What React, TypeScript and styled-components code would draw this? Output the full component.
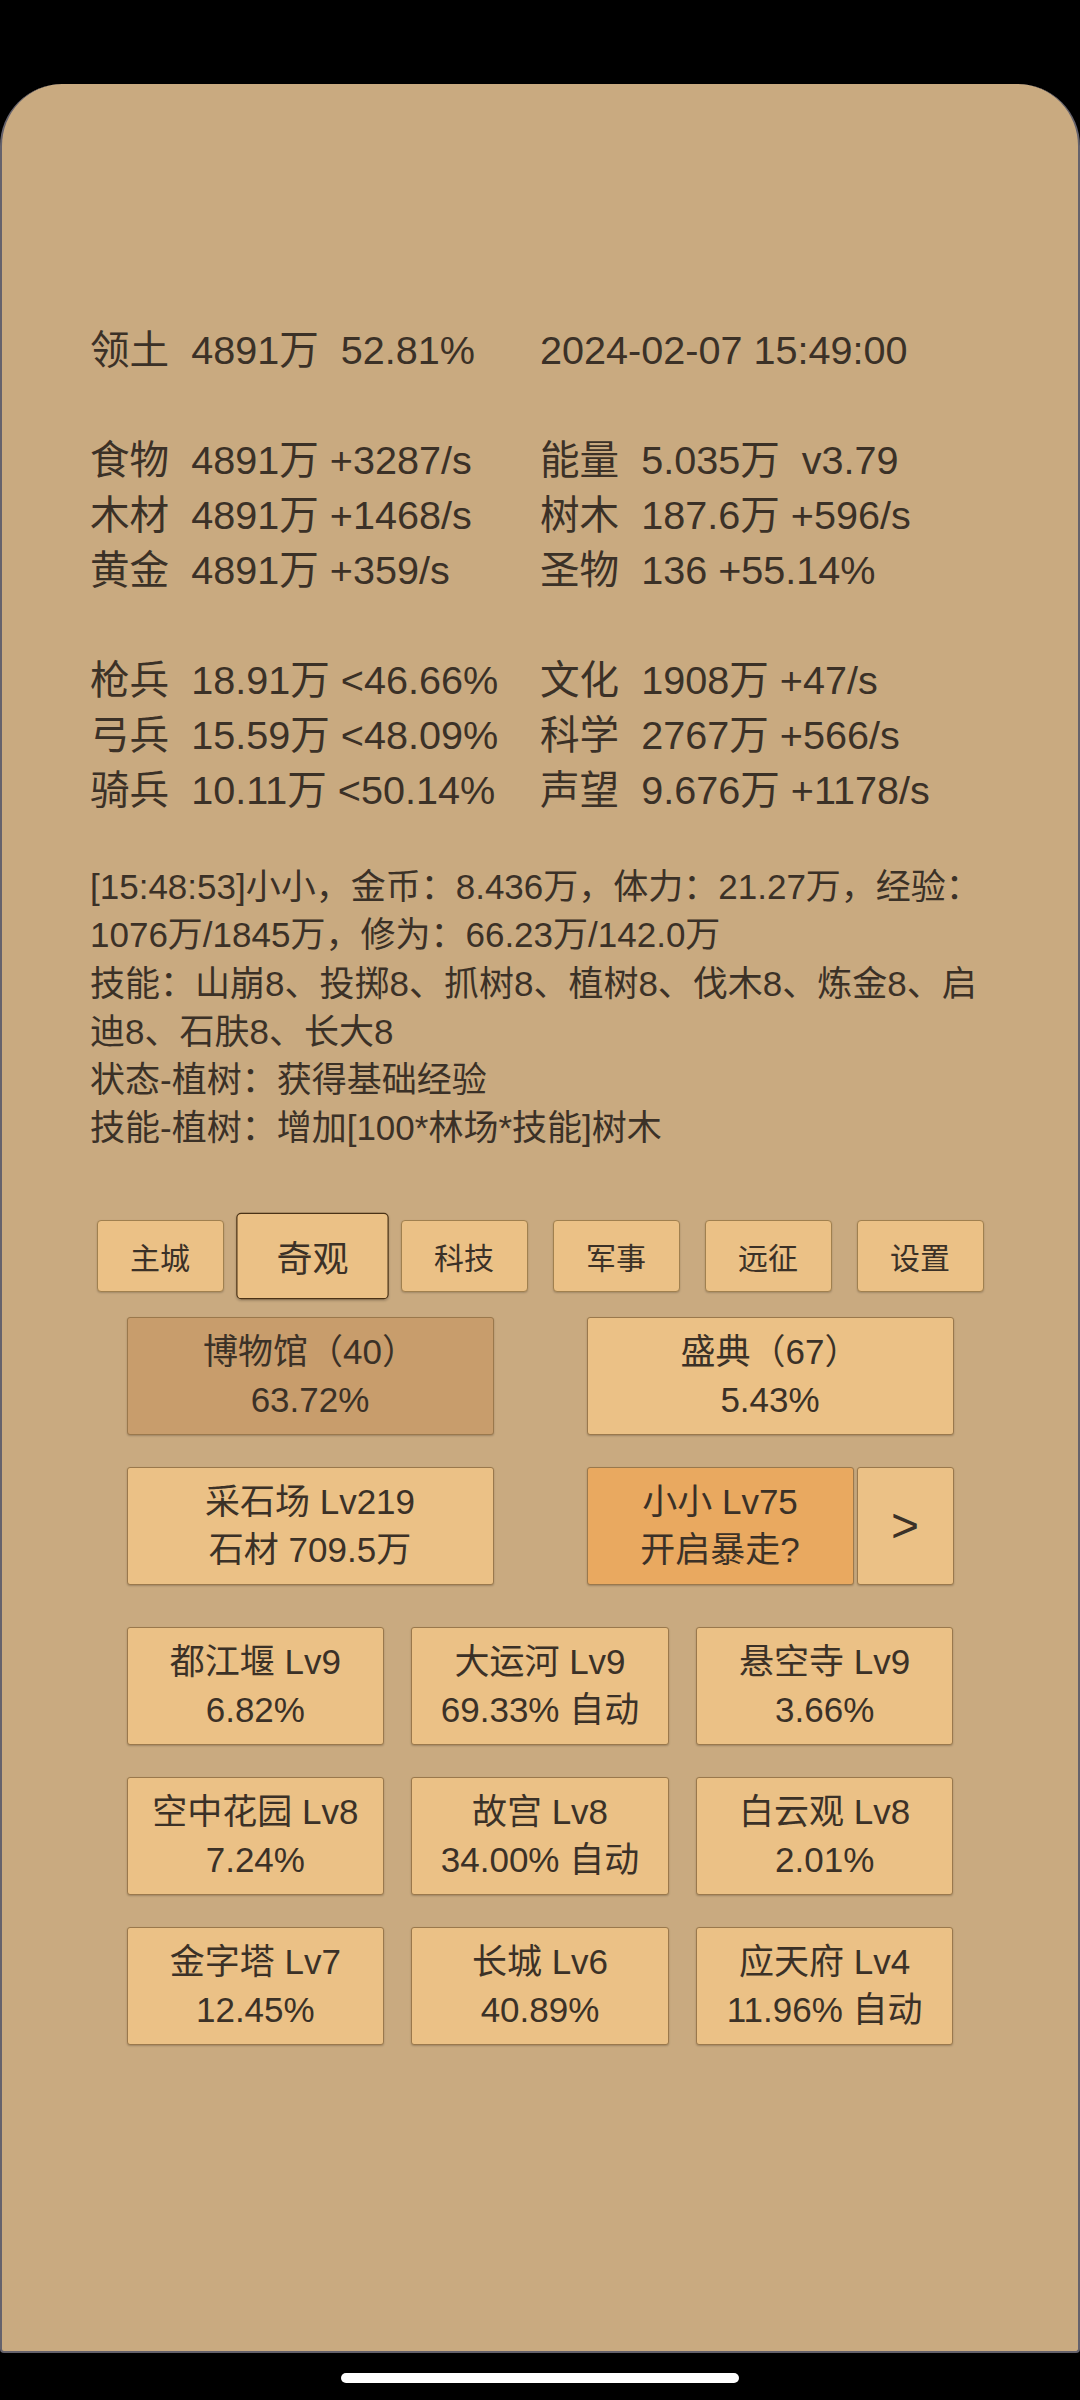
import styled, { createGlobalStyle } from "styled-components";

const GlobalStyle = createGlobalStyle`
  body {
    margin: 0;
    background: #000;
    font-family: "Liberation Sans", "Noto Sans CJK SC", sans-serif;
    color: #3b3127;
  }
`;

const Screen = styled.div`
  width: 1080px;
  height: 2400px;
  background: #000;
  padding-top: 84px;
  box-sizing: border-box;
  display: flex;
  flex-direction: column;
  align-items: center;
`;

const Panel = styled.div`
  width: 1080px;
  height: 2269px;
  box-sizing: border-box;
  background: #c9aa80;
  border: 2px solid #65626c;
  border-top: none;
  border-radius: 62px 62px 4px 4px;
  padding: 239px 88px 0;
  display: flex;
  flex-direction: column;
`;

const StatGroup = styled.div`
  display: grid;
  grid-template-columns: 450px 450px;
  font-size: 39.6px;
  line-height: 55px;
  white-space: pre;
  & + & {
    margin-top: 55px;
  }
`;

const Log = styled.div`
  margin-top: 45px;
  font-size: 35px;
  line-height: 48.3px;
  width: 900px;
`;

const TabRow = styled.div`
  margin-top: 67px;
  display: flex;
  justify-content: center;
  gap: 25px;
`;

const Tab = styled.div<{ $active?: boolean }>`
  width: 127px;
  height: 72px;
  box-sizing: border-box;
  display: flex;
  align-items: center;
  justify-content: center;
  font-size: 30px;
  background: #ebc186;
  border: 1px solid ${(p) => (p.$active ? "#4a3216" : "#a0804f")};
  border-radius: 4px;
  box-shadow: 0 1px 2px rgba(0, 0, 0, 0.2);
  transform: ${(p) => (p.$active ? "scale(1.2)" : "none")};
`;

const Boxes = styled.div`
  width: 827px;
  margin: 25px auto 0;
  display: flex;
  flex-direction: column;
  gap: 32px;
`;

const Pair = styled.div`
  display: flex;
  justify-content: space-between;
`;

const Split = styled.div`
  width: 367px;
  display: flex;
  gap: 3px;
`;

const Grid = styled.div`
  margin-top: 10px;
  display: grid;
  grid-template-columns: repeat(3, 1fr);
  column-gap: 27px;
  row-gap: 32px;
`;

const Card = styled.div<{ $tone?: "plain" | "dim" | "hot"; $w?: number }>`
  width: ${(p) => (p.$w ? `${p.$w}px` : "auto")};
  height: 118px;
  box-sizing: border-box;
  display: flex;
  flex-direction: column;
  align-items: center;
  justify-content: center;
  text-align: center;
  font-size: 35px;
  line-height: 48px;
  background: ${(p) =>
    p.$tone === "dim" ? "#c89d6c" : p.$tone === "hot" ? "#e9a960" : "#ebc186"};
  border: 1px solid #9a784c;
  border-radius: 3px;
  box-shadow: 0 1px 2px rgba(0, 0, 0, 0.22);
  white-space: pre;
`;

const Arrow = styled(Card)`
  font-size: 48px;
`;

const HomeBar = styled.div`
  width: 398px;
  height: 10px;
  border-radius: 5px;
  background: #fff;
  margin-top: 20px;
`;

const stats: [string, string][][] = [
  [["领土  4891万  52.81%", "2024-02-07 15:49:00"]],
  [
    ["食物  4891万 +3287/s", "能量  5.035万  v3.79"],
    ["木材  4891万 +1468/s", "树木  187.6万 +596/s"],
    ["黄金  4891万 +359/s", "圣物  136 +55.14%"],
  ],
  [
    ["枪兵  18.91万 <46.66%", "文化  1908万 +47/s"],
    ["弓兵  15.59万 <48.09%", "科学  2767万 +566/s"],
    ["骑兵  10.11万 <50.14%", "声望  9.676万 +1178/s"],
  ],
];

const tabs = ["主城", "奇观", "科技", "军事", "远征", "设置"];

const wonders = [
  ["都江堰 Lv9", "6.82%"],
  ["大运河 Lv9", "69.33% 自动"],
  ["悬空寺 Lv9", "3.66%"],
  ["空中花园 Lv8", "7.24%"],
  ["故宫 Lv8", "34.00% 自动"],
  ["白云观 Lv8", "2.01%"],
  ["金字塔 Lv7", "12.45%"],
  ["长城 Lv6", "40.89%"],
  ["应天府 Lv4", "11.96% 自动"],
];

export default function App() {
  return (
    <>
      <GlobalStyle />
      <Screen>
        <Panel>
          {stats.map((group, i) => (
            <StatGroup key={i}>
              {group.flatMap(([a, b]) => [<div key={a}>{a}</div>, <div key={b}>{b}</div>])}
            </StatGroup>
          ))}

          <Log>
            <div>[15:48:53]小小，金币：8.436万，体力：21.27万，经验：1076万/1845万，修为：66.23万/142.0万</div>
            <div>技能：山崩8、投掷8、抓树8、植树8、伐木8、炼金8、启迪8、石肤8、长大8</div>
            <div>状态-植树：获得基础经验</div>
            <div>技能-植树：增加[100*林场*技能]树木</div>
          </Log>

          <TabRow>
            {tabs.map((t) => (
              <Tab key={t} $active={t === "奇观"}>
                {t}
              </Tab>
            ))}
          </TabRow>

          <Boxes>
            <Pair>
              <Card $tone="dim" $w={367}>
                {"博物馆（40）\n63.72%"}
              </Card>
              <Card $w={367}>{"盛典（67）\n5.43%"}</Card>
            </Pair>
            <Pair>
              <Card $w={367}>{"采石场 Lv219\n石材 709.5万"}</Card>
              <Split>
                <Card $tone="hot" $w={267}>
                  {"小小 Lv75\n开启暴走?"}
                </Card>
                <Arrow $w={97}>&gt;</Arrow>
              </Split>
            </Pair>
            <Grid>
              {wonders.map(([name, val]) => (
                <Card key={name}>{`${name}\n${val}`}</Card>
              ))}
            </Grid>
          </Boxes>
        </Panel>
        <HomeBar />
      </Screen>
    </>
  );
}
